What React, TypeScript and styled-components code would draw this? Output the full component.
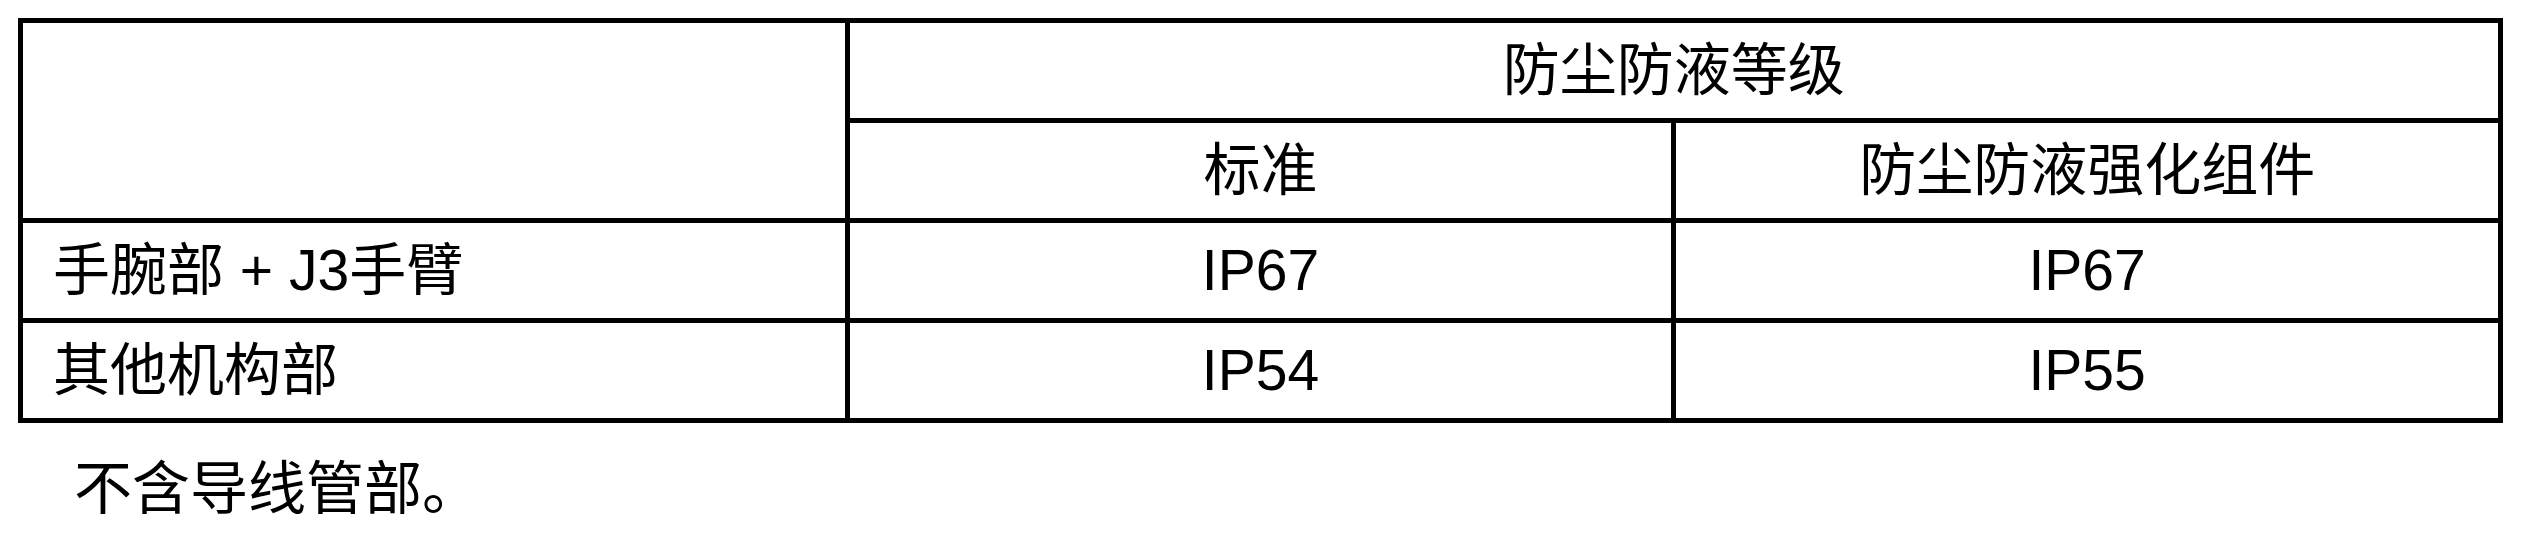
import React from 'react';
import styled, { createGlobalStyle } from 'styled-components';

const GlobalStyle = createGlobalStyle`
  html, body {
    margin: 0;
    padding: 0;
    background: #ffffff;
  }
  body {
    font-family: "Liberation Sans", "Noto Sans CJK SC", sans-serif;
    color: #000000;
  }
`;

const Page = styled.div`
  padding: 18px 0 0 18px;
  width: 2526px;
  height: 540px;
  box-sizing: border-box;
`;

const Table = styled.table`
  width: 2485px;
  border-collapse: collapse;
  table-layout: fixed;
  border: 5px solid #000;
`;

const Cell = styled.td<{ $align?: 'left' | 'center' }>`
  border: 5px solid #000;
  height: 95px;
  padding: 0 0 0 ${(p) => (p.$align === 'left' ? '30px' : '0')};
  text-align: ${(p) => p.$align ?? 'center'};
  vertical-align: middle;
  font-size: 57px;
  line-height: 1;
  white-space: nowrap;
`;

const Note = styled.p`
  margin: 31px 0 0 56px;
  font-size: 58px;
  line-height: 1.2;
`;

const rows = [
  { part: '手腕部 + J3手臂', standard: 'IP67', enhanced: 'IP67' },
  { part: '其他机构部', standard: 'IP54', enhanced: 'IP55' },
];

export default function App() {
  return (
    <Page>
      <GlobalStyle />
      <Table>
        <colgroup>
          <col />
          <col />
          <col />
        </colgroup>
        <tbody>
          <tr>
            <Cell rowSpan={2} />
            <Cell colSpan={2}>防尘防液等级</Cell>
          </tr>
          <tr>
            <Cell>标准</Cell>
            <Cell>防尘防液强化组件</Cell>
          </tr>
          {rows.map((r) => (
            <tr key={r.part}>
              <Cell $align="left">{r.part}</Cell>
              <Cell>{r.standard}</Cell>
              <Cell>{r.enhanced}</Cell>
            </tr>
          ))}
        </tbody>
      </Table>
      <Note>不含导线管部。</Note>
    </Page>
  );
}
